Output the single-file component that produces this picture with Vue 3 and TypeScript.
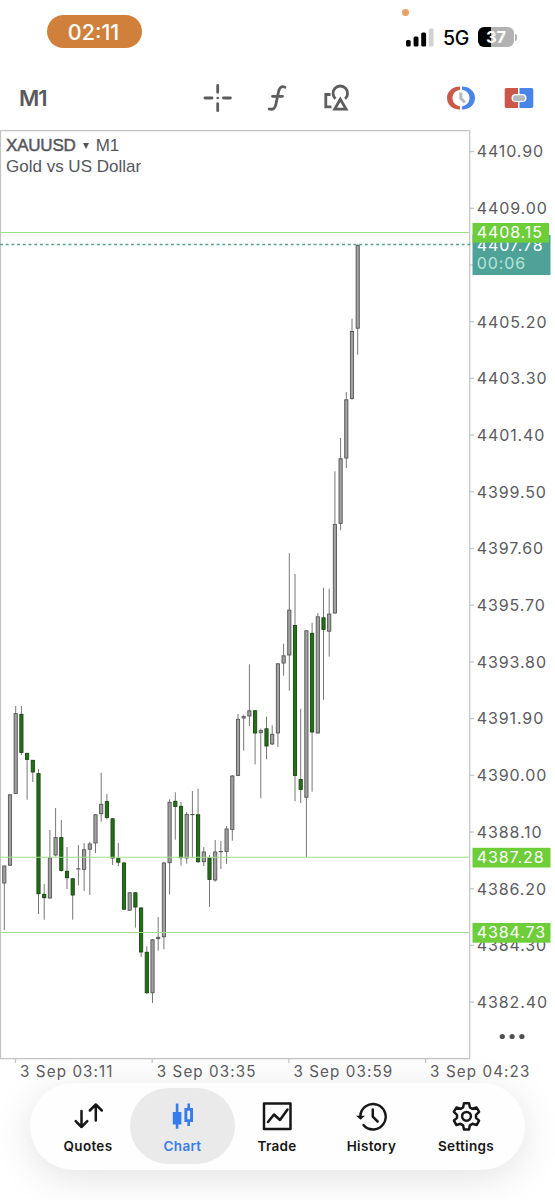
<script setup lang="ts">
interface Candle {
  x: number
  high: number
  top: number
  bottom: number
  low: number
  bear: boolean
}

type Row = [high: number, top: number, bottom: number, low: number, bear?: 1]

const STEP = 5.7
const FIRST_X = 4.3

const rows: Row[] = [
  [865.5, 865.7, 883.3, 930], [794, 794.5, 865.5, 866], [706, 713.3, 793.7, 794], [706, 714, 752.7, 755, 1],
  [753, 753, 759.7, 799.7, 1], [760, 760, 772.3, 782, 1], [769, 773.3, 894, 914, 1], [884, 894, 898, 919.7, 1],
  [830, 857.5, 898.3, 898.5], [808, 837.3, 855.3, 856.5], [820, 837.3, 870.7, 871.5, 1], [847, 871, 878, 889, 1],
  [878, 878.5, 895.3, 919.7, 1], [845, 868.5, 869, 885.3], [843, 849.5, 869.7, 891], [842, 843.7, 849.5, 895],
  [814, 814.5, 843.3, 853], [772.7, 804, 814, 821.7], [794, 801.3, 817.7, 819.5, 1], [818, 818.5, 858.3, 865, 1],
  [843, 858.3, 862.5, 866, 1], [862, 862.7, 909.5, 910, 1], [892, 892.5, 910.5, 910.5], [892, 892.5, 907.3, 927.7, 1],
  [907, 907.7, 952.3, 957, 1], [946.3, 952, 993, 994, 1], [939, 939.5, 993, 1003], [917, 937, 939, 950.7],
  [862, 862.7, 937, 949.3], [799.3, 802, 863, 894.3], [792.3, 801, 806.7, 839.7, 1], [802, 806, 858, 865.7, 1],
  [812, 814.3, 858.3, 863.7], [791, 814.2, 814.7, 858], [788.7, 814.5, 862, 863, 1], [847, 851.7, 862, 866],
  [855, 857.7, 879.7, 907, 1], [840, 851.7, 880.3, 881.7], [841, 851.2, 851.7, 869], [826, 828.7, 851.7, 864],
  [775, 775.7, 829.7, 840.7], [714, 719, 775.7, 776], [714.7, 716.3, 718.3, 750.7], [664.3, 710.5, 716.3, 726],
  [710, 710.5, 733.3, 764.3, 1], [728.7, 730.3, 733, 798.3], [716.7, 728.5, 746.3, 759.3, 1], [725.3, 734, 744.3, 745],
  [663, 663.5, 733.3, 747], [643.7, 655.5, 663.3, 675.7], [553.3, 609.8, 655.3, 690.7], [574, 625.2, 775.7, 801.3, 1],
  [708.7, 779.2, 789.7, 803, 1], [630, 630.5, 797.5, 857.3], [622.7, 633, 732.3, 791.7, 1], [613, 616.5, 733.3, 733.5],
  [587.7, 617.5, 629.7, 699.7, 1], [588.7, 613.8, 631.5, 656.7], [471.3, 524.2, 613.3, 613.5], [438, 458.5, 523.7, 530.3],
  [392, 399.5, 458.3, 468], [318.7, 331.2, 398.7, 399.7], [244.5, 245.2, 328.5, 354.7],
]

const candles: Candle[] = rows.map(([high, top, bottom, low, bear], i) => ({
  x: FIRST_X + i * STEP,
  high,
  top,
  bottom,
  low,
  bear: bear === 1,
}))

const priceTicks = Array.from({ length: 16 }, (_, i) => ({
  label: (4410.9 - i * 1.9).toFixed(2),
  y: 151.6 + i * 56.7,
}))

const timeTicks = ['03:11', '03:35', '03:59', '04:23'].map((time, i) => ({
  label: `3 Sep ${time}`,
  x: 15.5 + i * 136.7,
}))

const levels = [
  { label: '4408.15', y: 232.5 },
  { label: '4387.28', y: 857.3 },
  { label: '4384.73', y: 932.5 },
]

const tabs = ['Quotes', 'Chart', 'Trade', 'History', 'Settings']
const activeTab = 'Chart'
</script>

<template>
  <div class="screen">
    <header class="status">
      <div class="clock">02:11</div>
      <span class="mic-dot"></span>
      <div class="signals">
        <svg class="bars" width="28" height="19" viewBox="0 0 28 19">
          <rect x="0" y="12" width="4.7" height="6.5" rx="1.5" />
          <rect x="7.6" y="8.5" width="4.9" height="10" rx="1.5" />
          <rect x="15.2" y="4.5" width="4.9" height="14" rx="1.5" />
          <rect x="22.8" y="0.5" width="4.8" height="18" rx="1.5" class="dim" />
        </svg>
        <span class="network">5G</span>
        <div class="battery"><span>37</span></div>
        <i class="battery-cap"></i>
      </div>
    </header>

    <div class="toolbar">
      <span class="timeframe">M1</span>
      <svg class="tool cross" width="30" height="30" viewBox="0 0 30 30">
        <path d="M14.700 2.300v7M14.700 20.700v7M2 15h7M20.400 15h7" />
        <circle cx="14.700" cy="15" r="1.3" />
      </svg>
      <svg class="tool func" width="30" height="30" viewBox="0 0 30 30">
        <path d="M22 4.200c-3.800-1.400-5.500.2-6.400 4.200l-2.700 12.900c-.7 3.600-2.300 5.700-6.700 4.700M9.500 13.300h10" />
      </svg>
      <svg class="tool shapes" width="30" height="30" viewBox="0 0 30 30">
        <path d="M8.500 11.500H3.800v12.300H9.500M13.500 15.800a7.300 7.300 0 1 1 9.600 0M18.300 16.300l-5.600 9.800h11.400z" />
      </svg>
      <svg class="trade-clock" width="30" height="26" viewBox="0 0 30 26">
        <path class="red" d="M14 1.500C7 1.500 1 6 1 13s6 11.500 13 11.500v-3.200C9.500 20.500 6.500 17.500 6.500 13S9.500 5.500 14 4.700z" />
        <path class="blue" d="M16 1.500c7 0 13 4.500 13 11.500s-6 11.500-13 11.500v-3.200c4.500-.8 7.500-3.800 7.500-8.300S20.500 5.500 16 4.700z" />
        <path class="hand" d="M14.800 7.500v5.800l4.200 4.200" />
      </svg>
      <svg class="one-click" width="30" height="22" viewBox="0 0 30 22">
        <path class="red" d="M2.500 1H14v6h-2.500a4 4 0 0 0 0 8H14v6H2.500A1.800 1.800 0 0 1 .7 19.200V2.800A1.800 1.800 0 0 1 2.500 1z" />
        <path class="blue" d="M15.500 1h12a1.800 1.800 0 0 1 1.800 1.800v16.400a1.800 1.800 0 0 1-1.800 1.800h-12v-6h3a4 4 0 0 0 0-8h-3z" />
        <rect class="chip" x="9" y="8.200" width="12" height="5.800" rx="2.600" />
      </svg>
    </div>

    <main class="chart">
      <svg class="plot" width="555" height="954" viewBox="0 130 555 954">
        <path class="frame" d="M.5 131V1059M0 130.700H469.700V1058.700H0" />

        <g v-for="t in priceTicks" :key="t.label">
          <path class="tick" :d="`M470 ${t.y}h4`" />
          <text class="axis" x="476.700" :y="t.y + 5.8">{{ t.label }}</text>
        </g>
        <g v-for="t in timeTicks" :key="t.label">
          <path class="tick" :d="`M${t.x} 1059v4`" />
          <text class="axis time" :x="t.x + 4.5" y="1076.500">{{ t.label }}</text>
        </g>

        <g v-for="c in candles" :key="c.x">
          <path class="wick" :d="`M${c.x} ${c.high}V${c.low}`" />
          <rect
            :class="c.bear ? 'bear' : 'bull'"
            :x="c.x - 1.6"
            :y="c.top + 0.3"
            width="3.2"
            :height="Math.max(c.bottom - c.top - 0.6, 0.2)"
          />
        </g>

        <path v-for="l in levels" :key="l.label" class="level" :d="`M0 ${l.y}H469`" />
        <path class="bid-line" d="M0 244.600H472" />

        <rect class="bid-tag" x="472.500" y="235" width="78" height="40" />
        <text class="axis bid" x="476.700" y="250.500">4407.78</text>
        <text class="axis timer" x="476.700" y="269">00:06</text>

        <g v-for="l in levels" :key="l.label">
          <rect class="level-tag" x="472.500" :y="l.y - 9.5" :width="l.y < 300 ? 76.5 : 78" height="19.700" />
          <text class="axis on-tag" x="476.700" :y="l.y + 5.9">{{ l.label }}</text>
        </g>

        <g class="more">
          <circle cx="502.300" cy="1036.500" r="2.600" />
          <circle cx="512.100" cy="1036.500" r="2.600" />
          <circle cx="521.900" cy="1036.500" r="2.600" />
        </g>
      </svg>
      <div class="symbol">
        <div><b>XAUUSD</b><i class="caret"></i>M1</div>
        <div>Gold vs US Dollar</div>
      </div>
    </main>

    <nav class="tabs">
      <div v-for="tab in tabs" :key="tab" class="tab" :class="{ active: tab === activeTab }">
        <svg width="32" height="32" viewBox="0 0 32 32">
          <path v-if="tab === 'Quotes'" class="line" d="M9.500 11v16M3.700 21.200l5.800 5.800 5.800-5.800M23.800 20.500V4.800M17.800 10.500l6-6 6 6" />
          <g v-else-if="tab === 'Chart'">
            <path class="solid" d="M8.800 3.500h2.600V12h3v12.500h-3v4.200H8.800v-4.200H5.800V12h3z" />
            <path class="solid" fill-rule="evenodd" d="M20.400 3.500H23V8h3v14h-3v4h-2.600v-4h-3V8h3zM20.300 10.800v8.400h2.800v-8.400z" />
          </g>
          <path v-else-if="tab === 'Trade'" class="line" d="M3 3.500h26.500v25.500H3zM7 22l6-7.500 6 5.500 7.500-10.500" />
          <g v-else-if="tab === 'History'">
            <path class="line" d="M4.300 16.200A12.700 12.700 0 1 1 7.500 25.200M16.800 9.500v7.200l4.800 4.800" />
            <path class="solid" d="M0 15.800h9l-4.400 4z" />
          </g>
          <g v-else>
            <path
              class="line"
              d="M14 3.200h5l.9 4.100 2.600 1.500 4.100-1.300 2.500 4.400-3.100 2.900v3l3.100 2.900-2.500 4.300-4.100-1.200-2.600 1.500-.9 4.100h-5l-.9-4.100-2.600-1.500-4.100 1.200-2.500-4.300 3.100-2.900v-3l-3.100-2.900 2.500-4.400 4.100 1.300 2.600-1.500z"
            />
            <circle class="line" cx="16.500" cy="16.300" r="4.400" />
          </g>
        </svg>
        <span>{{ tab }}</span>
      </div>
    </nav>
  </div>
</template>

<style>
body {
  margin: 0;
  background: #fff;
}
</style>

<style scoped>
.screen {
  display: flex;
  flex-direction: column;
  width: 555px;
  height: 1200px;
  overflow: hidden;
  background: #fff;
  color: #58595c;
  font-family: Inter, "Liberation Sans", sans-serif;
}
.status {
  position: relative;
  display: flex;
  justify-content: space-between;
  box-sizing: border-box;
  height: 65px;
  padding: 15px 38px 0 47px;
}
.clock {
  box-sizing: border-box;
  width: 95px;
  height: 33px;
  padding-right: 2px;
  border-radius: 17px;
  background: #d0803b;
  color: #fff;
  font-size: 21.5px;
  font-weight: 500;
  line-height: 34px;
  text-align: center;
}
.mic-dot {
  position: absolute;
  left: 402px;
  top: 9px;
  width: 7px;
  height: 7px;
  border-radius: 50%;
  background: #eba064;
}
.signals {
  display: flex;
  align-items: center;
  height: 20px;
  margin-top: 12px;
  color: #000;
}
.bars .dim {
  fill: #d2d2d2;
}
.network {
  width: 28px;
  margin: 2px 7px 0 9px;
  font-size: 19.5px;
  font-weight: 500;
  letter-spacing: -0.3px;
  line-height: 20px;
}
.battery {
  width: 36px;
  height: 20px;
  border-radius: 6px;
  background: linear-gradient(90deg, #000 37%, #b2b2b2 37%);
  color: #fff;
  font-size: 16.5px;
  font-weight: 700;
  line-height: 20px;
  text-align: center;
}
.battery-cap {
  width: 2px;
  height: 7px;
  margin-left: 1px;
  border-radius: 0 3px 3px 0;
  background: #b2b2b2;
}
.toolbar {
  display: flex;
  align-items: center;
  height: 65px;
  padding: 0 21px 0 19px;
}
.timeframe {
  width: 184px;
  font-size: 22px;
  font-weight: 600;
  letter-spacing: -1px;
}
.tool {
  fill: none;
  stroke: #5d5d5d;
  stroke-width: 2.8;
}
.cross {
  stroke-linecap: round;
}
.cross circle {
  fill: #5d5d5d;
  stroke: none;
}
.func {
  margin-left: 30px;
  stroke-linecap: round;
}
.shapes {
  margin-left: 29px;
}
.trade-clock {
  margin-left: 94px;
}
.one-click {
  margin-left: 28px;
}
.red {
  fill: #cb5748;
}
.blue {
  fill: #4985e9;
}
.hand {
  fill: none;
  stroke: #b4bac2;
  stroke-width: 3;
}
.chip {
  fill: #b4bac2;
}
.chart {
  position: relative;
  height: 954px;
}
.plot {
  display: block;
}
.frame,
.tick {
  fill: none;
  stroke: #c3c3c3;
  stroke-width: 1.2;
}
.axis {
  fill: #5b5b5f;
  font-size: 16px;
  letter-spacing: 0.9px;
}
.axis.time {
  font-size: 15.2px;
  letter-spacing: 1.1px;
}
.wick {
  stroke: #777;
  stroke-width: 1;
}
.bull {
  fill: #a0a0a0;
  stroke: #555;
  stroke-width: 0.9;
}
.bear {
  fill: #237018;
  stroke: #174710;
  stroke-width: 0.9;
}
.level {
  stroke: #9ee086;
  stroke-width: 1.1;
}
.bid-line {
  stroke: #57a392;
  stroke-width: 1.5;
  stroke-dasharray: 3 2.7;
}
.bid-tag {
  fill: #4fa297;
}
.level-tag {
  fill: #6dce3a;
}
.axis.bid,
.axis.on-tag {
  fill: #fff;
}
.axis.timer {
  fill: #b5e4dc;
}
.more {
  fill: #505154;
}
.symbol {
  position: absolute;
  left: 6px;
  top: 5px;
  color: #55565d;
  font-family: "Liberation Sans", Arial, sans-serif;
  font-size: 17px;
  line-height: 21px;
}
.symbol b {
  font-weight: 400;
  letter-spacing: -0.2px;
  -webkit-text-stroke: 0.45px #55565d;
}
.caret {
  display: inline-block;
  margin: 0 7px 2px;
  border: 3.5px solid transparent;
  border-top: 6px solid #55565d;
  border-bottom: 0;
}
.tabs {
  display: flex;
  box-sizing: border-box;
  width: 495px;
  height: 87px;
  margin: -1px 0 0 30px;
  padding: 5px 5.5px 6px;
  border-radius: 44px;
  background: #fefefe;
  box-shadow: 0 8px 40px rgba(0, 0, 0, 0.115);
  color: #171717;
}
.tab {
  display: flex;
  flex-direction: column;
  align-items: center;
  box-sizing: border-box;
  width: 105px;
  height: 76px;
  margin-right: -10.5px;
  padding-top: 12px;
  border-radius: 38px;
  font-size: 13.5px;
  font-weight: 600;
  letter-spacing: 0.3px;
  line-height: 20px;
}
.tab svg {
  flex: none;
  overflow: visible;
}
.tab span {
  margin-top: 4px;
}
.tab.active {
  background: #eaeaea;
  color: #377cec;
}
.line {
  fill: none;
  stroke: currentColor;
  stroke-width: 2.5;
  stroke-linecap: round;
  stroke-linejoin: round;
}
.solid {
  fill: currentColor;
}
</style>
